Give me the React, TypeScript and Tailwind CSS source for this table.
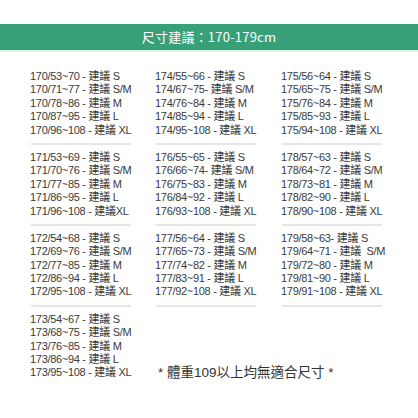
import React from "react";

type Block = string[];

const rows: Block[][] = [
  [
    ["170/53~70 - 建議 S", "170/71~77 - 建議 S/M", "170/78~86 - 建議 M", "170/87~95 - 建議 L", "170/96~108 - 建議 XL"],
    ["174/55~66 - 建議 S", "174/67~75- 建議 S/M", "174/76~84 - 建議 M", "174/85~94 - 建議 L", "174/95~108 - 建議 XL"],
    ["175/56~64 - 建議 S", "175/65~75 - 建議 S/M", "175/76~84 - 建議 M", "175/85~93 - 建議 L", "175/94~108 - 建議 XL"],
  ],
  [
    ["171/53~69 - 建議 S", "171/70~76 - 建議 S/M", "171/77~85 - 建議 M", "171/86~95 - 建議 L", "171/96~108 - 建議XL"],
    ["176/55~65 - 建議 S", "176/66~74- 建議 S/M", "176/75~83 - 建議 M", "176/84~92 - 建議 L", "176/93~108 - 建議 XL"],
    ["178/57~63 - 建議 S", "178/64~72 - 建議 S/M", "178/73~81 - 建議 M", "178/82~90 - 建議 L", "178/90~108 - 建議 XL"],
  ],
  [
    ["172/54~68 - 建議 S", "172/69~76 - 建議 S/M", "172/77~85 - 建議 M", "172/86~94 - 建議 L", "172/95~108 - 建議 XL"],
    ["177/56~64 - 建議 S", "177/65~73 - 建議 S/M", "177/74~82 - 建議 M", "177/83~91 - 建議 L", "177/92~108 - 建議 XL"],
    ["179/58~63- 建議 S", "179/64~71 - 建議  S/M", "179/72~80 - 建議 M", "179/81~90 - 建議 L", "179/91~108 - 建議 XL"],
  ],
];

const last: Block = ["173/54~67 - 建議 S", "173/68~75 - 建議 S/M", "173/76~85 - 建議 M", "173/86~94 - 建議 L", "173/95~108 - 建議 XL"];

const SizeBlock = ({ lines, line = true }: { lines: Block; line?: boolean }) => (
  <div className="flex flex-col">
    <div className="flex flex-col pt-[6px] pb-[6px]">
      {lines.map((l) => (
        <div key={l} className="h-[13.4px] leading-[13.4px] whitespace-pre tracking-[-0.3px]">
          {l}
        </div>
      ))}
    </div>
    {line && <div className="w-[100px] h-[2px] bg-[#e6e6e6] ml-[1px]" />}
  </div>
);

export default function App() {
  return (
    <div
      className="w-[418px] h-[418px] bg-white overflow-hidden pt-[24px]"
      style={{ fontFamily: '"Liberation Sans", "Noto Sans CJK TC", sans-serif' }}
    >
      <div
        className="h-[28px] bg-[#37a079] border-b-[2px] border-[#d9f3e7] flex items-center justify-center text-white text-[13px] tracking-[0.2px]"
        style={{ fontFamily: '"Noto Sans CJK TC", sans-serif' }}
      >
        尺寸建議：170-179cm
      </div>

      <div className="pl-[30px] pt-[12px] text-[11px] text-[#3a3a3a]">
        {rows.map((row, i) => (
          <div key={i} className="grid grid-cols-[125px_126px_126px]">
            {row.map((b) => (
              <SizeBlock key={b[0]} lines={b} />
            ))}
          </div>
        ))}
        <div className="grid grid-cols-[125px_252px]">
          <SizeBlock lines={last} line={false} />
          <div className="flex items-end pb-[5px] pl-[3px] text-[13.5px] leading-[16px] text-[#333]">
            * 體重109以上均無適合尺寸 *
          </div>
        </div>
      </div>
    </div>
  );
}
